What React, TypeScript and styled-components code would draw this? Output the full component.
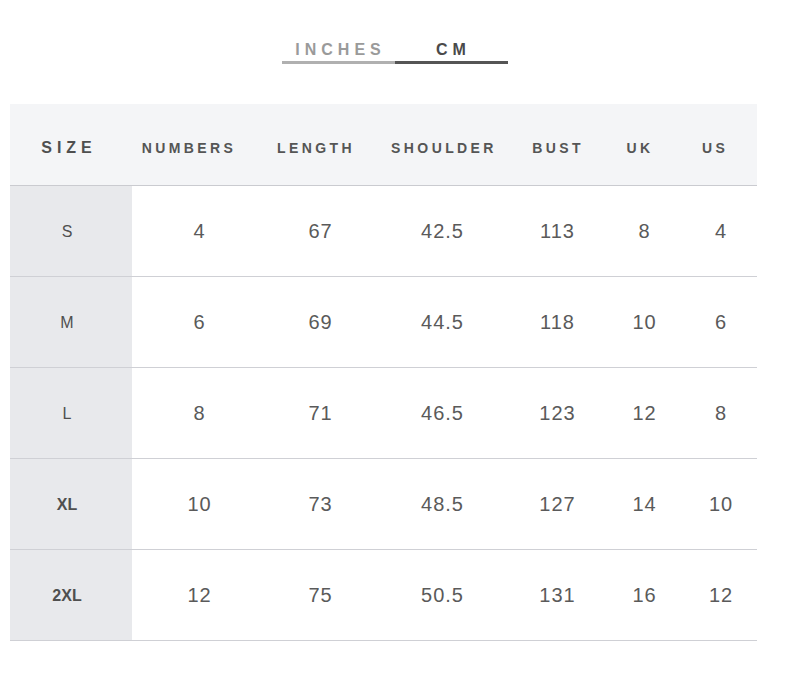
import React, { useState } from "react";
import styled, { createGlobalStyle } from "styled-components";

const Global = createGlobalStyle`
  html, body { margin: 0; padding: 0; background: #ffffff; }
  body { font-family: "Liberation Sans", Arial, sans-serif; }
`;

const Page = styled.div`
  width: 810px;
  height: 690px;
  padding-top: 37px;
  box-sizing: border-box;
  overflow: hidden;
`;

const Tabs = styled.div`
  display: flex;
  justify-content: center;
  margin-left: -21px;
`;

const Tab = styled.button<{ $active: boolean }>`
  width: 113px;
  height: 27px;
  padding: 1px 0 0 5px;
  border: none;
  border-bottom: 3px solid ${(p) => (p.$active ? "#555555" : "#b0b0b0")};
  background: transparent;
  font-family: "Liberation Sans", Arial, sans-serif;
  font-weight: 700;
  font-size: 16px;
  letter-spacing: 5px;
  color: ${(p) => (p.$active ? "#4a4a4a" : "#9a9a9a")};
  line-height: 22px;
  cursor: pointer;
`;

const Table = styled.div`
  margin: 40px 0 0 10px;
  width: 747px;
`;

const HeaderRow = styled.div`
  display: grid;
  grid-template-columns: 115px 125px 129px 127px 101px 63px 87px;
  height: 82px;
  box-sizing: border-box;
  padding-top: 6px;
  background: #f4f5f7;
  border-bottom: 1px solid #cacbd0;
  align-items: center;
`;

const HeadCell = styled.div<{ $big?: boolean }>`
  text-align: center;
  padding-left: 3px;
  font-weight: 700;
  font-size: ${(p) => (p.$big ? "16px" : "14px")};
  letter-spacing: ${(p) => (p.$big ? "5px" : "3.4px")};
  color: ${(p) => (p.$big ? "#4f4f4f" : "#555555")};
`;

const Row = styled.div`
  display: grid;
  grid-template-columns: 122px 134px 108px 136px 94px 80px 73px;
  height: 90px;
  border-bottom: 1px solid #cfd0d5;
  align-items: stretch;
`;

const SizeCell = styled.div<{ $bold: boolean }>`
  display: flex;
  align-items: center;
  justify-content: center;
  background: #e8e9ec;
  font-size: 16px;
  font-weight: ${(p) => (p.$bold ? 700 : 400)};
  color: #4f4f4f;
  padding-top: 2px;
  padding-right: 8px;
`;

const ValueCell = styled.div`
  display: flex;
  align-items: center;
  justify-content: center;
  font-size: 20px;
  letter-spacing: 1px;
  color: #5a5a5a;
  padding-top: 1px;
  padding-left: 1px;
`;

const headers = ["NUMBERS", "LENGTH", "SHOULDER", "BUST", "UK", "US"];

const rows: { size: string; bold: boolean; values: string[] }[] = [
  { size: "S", bold: false, values: ["4", "67", "42.5", "113", "8", "4"] },
  { size: "M", bold: false, values: ["6", "69", "44.5", "118", "10", "6"] },
  { size: "L", bold: false, values: ["8", "71", "46.5", "123", "12", "8"] },
  { size: "XL", bold: true, values: ["10", "73", "48.5", "127", "14", "10"] },
  { size: "2XL", bold: true, values: ["12", "75", "50.5", "131", "16", "12"] },
];

export default function App() {
  const [unit, setUnit] = useState<"in" | "cm">("cm");
  return (
    <Page>
      <Global />
      <Tabs>
        <Tab $active={unit === "in"} onClick={() => setUnit("in")}>
          INCHES
        </Tab>
        <Tab $active={unit === "cm"} onClick={() => setUnit("cm")}>
          CM
        </Tab>
      </Tabs>
      <Table>
        <HeaderRow>
          <HeadCell $big>SIZE</HeadCell>
          {headers.map((h) => (
            <HeadCell key={h}>{h}</HeadCell>
          ))}
        </HeaderRow>
        {rows.map((r) => (
          <Row key={r.size}>
            <SizeCell $bold={r.bold}>{r.size}</SizeCell>
            {r.values.map((v, i) => (
              <ValueCell key={i}>{v}</ValueCell>
            ))}
          </Row>
        ))}
      </Table>
    </Page>
  );
}
